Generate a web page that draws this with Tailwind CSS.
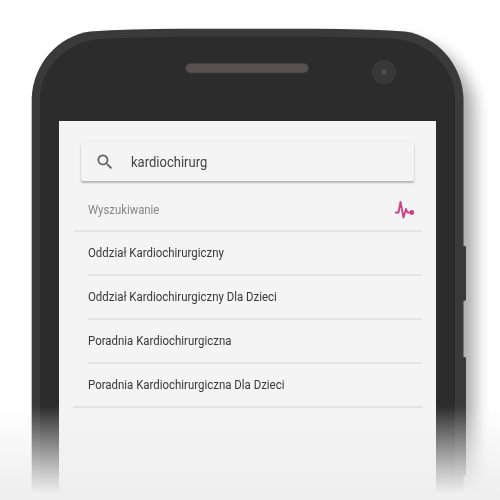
<!DOCTYPE html>
<html lang="pl">
<head>
<meta charset="utf-8">
<title>Wyszukiwanie</title>
<script src="https://cdn.jsdelivr.net/npm/@tailwindcss/browser@4"></script>
</head>
<body class="bg-white">
<div class="relative h-[500px] w-[500px] overflow-hidden bg-white font-['Roboto',sans-serif]">
  <!-- phone body -->
  <svg class="absolute inset-0" width="500" height="500" viewBox="0 0 500 500">
    <defs>
      <filter id="soft" x="-10%" y="-10%" width="125%" height="125%"><feGaussianBlur stdDeviation="8"/></filter>
      <path id="body" d="M31.700 520V98C33 64 58 36 90 31.500Q130 29 180 28.800H315Q365 29 405 31.500C437 36 462 64 463.500 98V520Z"/>
    </defs>
    <use href="#body" fill="#000" opacity=".34" filter="url(#soft)" transform="translate(11 12)"/>
    <path d="M0 0H31.700V500H0Z" fill="#fff"/>
    <path d="M462 246H465Q466 246 466 248V299Q466 301 464 301H462ZM462 357H465Q466 357 466 359V474Q466 476 464 476H462Z" fill="#3a3a3a"/>
    <use href="#body" fill="#3a3a3a"/>
    <path d="M40 520V98C41 68 65 43 98 39Q140 37 180 36.800H315Q360 37 397 39C430 43 454 68 455 98V520Z" fill="#2c2c2c"/>
    <rect x="185.500" y="63.500" width="123" height="9.500" rx="4.750" fill="#575150" stroke="#403e3e" stroke-width=".8"/>
    <circle cx="384" cy="72" r="12.200" fill="#383838"/>
    <circle cx="384" cy="72" r="2.200" fill="#44535f"/>
  </svg>

  <!-- screen -->
  <main class="relative ml-[59px] mt-[121px] h-[379px] w-[377px] bg-[#f4f4f4] pt-[21px]">
    <div class="ml-[22px] flex h-[39px] w-[333px] items-center rounded-[2px] bg-[#f4f4f4] shadow-[0_2px_2px_rgba(0,0,0,0.25),0_0_2px_rgba(0,0,0,0.1)]">
      <svg class="ml-[14px] shrink-0" width="20" height="20" viewBox="0 0 24 24" fill="#5c5c5c"><path d="M15.500 14h-.79l-.28-.27A6.471 6.471 0 0 0 16 9.500 6.500 6.500 0 1 0 9.500 16c1.610 0 3.090-.59 4.230-1.570l.27.28v.79l5 4.990L20.490 19l-4.990-5zm-6 0C7.010 14 5 11.990 5 9.500S7.010 5 9.500 5 14 7.010 14 9.500 11.990 14 9.500 14z"/></svg>
      <span class="ml-[16px] inline-block origin-left scale-x-[0.84] whitespace-nowrap text-[15.5px] leading-[20px] text-[#424242]">kardiochirurg</span>
    </div>
    <div class="ml-[15px] flex h-[51px] w-[348px] items-center justify-between border-b-2 border-[#e4e4e4] pl-[14px] pr-[6px]">
      <h1 class="origin-left scale-x-[0.84] whitespace-nowrap pt-[6px] text-[13.5px] leading-[20px] text-[#858585]">Wyszukiwanie</h1>
      <svg class="mt-[8px]" width="22" height="20" viewBox="0 0 22 20" fill="none" stroke="#cc4388" stroke-width="1.900" stroke-linejoin="round"><path d="M1 12.500H4.500L6.500 2L9.500 17.500L12 9L13.500 12.500H18"/><circle cx="17.800" cy="12.500" r="2.400" fill="#ca3b82" stroke="none"/></svg>
    </div>
    <ul class="ml-[29px] w-[334px] text-[13.5px] leading-[20px] text-[#383838]">
      <li class="flex h-[44px] items-center border-b-2 border-[#e4e4e4] pb-[2px]"><span class="origin-left scale-x-[0.847] whitespace-nowrap">Oddział Kardiochirurgiczny</span></li>
      <li class="flex h-[44px] items-center border-b-2 border-[#e4e4e4] pb-[2px]"><span class="origin-left scale-x-[0.847] whitespace-nowrap">Oddział Kardiochirurgiczny Dla Dzieci</span></li>
      <li class="flex h-[44px] items-center border-b-2 border-[#e4e4e4] pb-[2px]"><span class="origin-left scale-x-[0.847] whitespace-nowrap">Poradnia Kardiochirurgiczna</span></li>
      <li class="-ml-[15px] flex h-[44px] items-center border-b-2 border-[#e2e2e2] pb-[2px] pl-[15px]"><span class="origin-left scale-x-[0.847] whitespace-nowrap">Poradnia Kardiochirurgiczna Dla Dzieci</span></li>
    </ul>
  </main>

  <!-- fade at the bottom -->
  <div class="absolute inset-x-0 bottom-0 h-[94px] bg-[linear-gradient(to_bottom,rgba(239,239,239,0)_0%,rgba(239,239,239,0.42)_36%,rgba(239,239,239,0.75)_66%,#efefef_93%)]"></div>
</div>
</body>
</html>
